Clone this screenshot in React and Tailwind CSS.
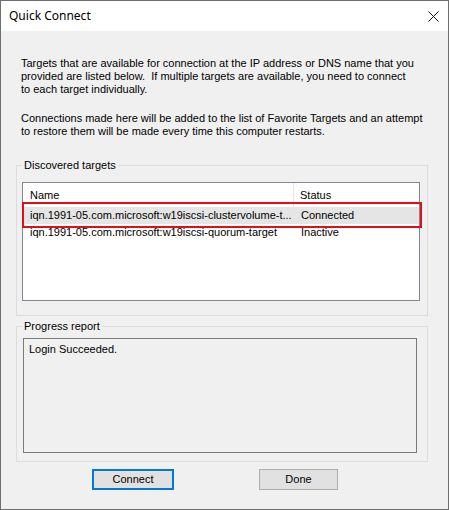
import React from 'react'

const body = { fontFamily: '"Liberation Sans", Arial, sans-serif' }

function GroupBox({ title, className, children }){
  return (
    <fieldset className={"border border-[#dcdcdc] " + className}>
      <legend className="ml-[5px] px-[2px] h-[13px] leading-[13px] text-[11px] text-black">{title}</legend>
      {children}
    </fieldset>
  )
}

function Btn({ focused, className, children }){
  return (
    <button
      className={
        'h-[21px] bg-[#e1e1e1] text-[11px] text-black leading-none ' +
        (focused ? 'border-2 border-[#0078d7] ' : 'border border-[#adadad] ') +
        className
      }
    >
      {children}
    </button>
  )
}

export default function App(){
  const targets = [
    { name: 'iqn.1991-05.com.microsoft:w19iscsi-clustervolume-t...', status: 'Connected', selected: true },
    { name: 'iqn.1991-05.com.microsoft:w19iscsi-quorum-target', status: 'Inactive' },
  ]

  return (
    <div className="w-[449px] h-[510px] border border-[#6e6e6e] bg-[#f0f0f0] flex flex-col relative overflow-hidden" style={body}>
      {/* title bar */}
      <div className="h-[30px] bg-white flex items-center justify-between pl-[8px] pr-[9px] shrink-0">
        <span className="text-[12px] text-black" style={{ fontFamily: '"Noto Sans", "Open Sans", sans-serif' }}>Quick Connect</span>
        <svg width="11" height="11" viewBox="0 0 11 11" className="mt-[1px]">
          <path d="M0.5 0.5 L10.5 10.5 M10.5 0.5 L0.5 10.5" stroke="#111" strokeWidth="1" />
        </svg>
      </div>

      <div className="px-[15px] flex flex-col text-[11px] leading-[13px] text-black">
        <p className="mt-[26px] ml-[5px] w-[396px]">
          Targets that are available for connection at the IP address or DNS name that you provided are listed below.&nbsp; If multiple targets are available, you need to connect to each target individually.
        </p>
        <p className="mt-[16px] ml-[5px] w-[405px]">
          Connections made here will be added to the list of Favorite Targets and an attempt to restore them will be made every time this computer restarts.
        </p>

        <GroupBox title="Discovered targets" className="mt-[21px] w-[412px] pb-[14px]">
          <div className="relative mt-[10px] ml-[5px] w-[398px] h-[119px] border border-[#828790] bg-white">
            <div className="flex h-[24px] items-center">
              <div className="w-[271px] pl-[7px] h-full flex items-center border-r border-[#e5e5e5]">Name</div>
              <div className="pl-[6px]">Status</div>
            </div>
            {targets.map(t => (
              <div key={t.name} className={"flex h-[17px] items-center " + (t.selected ? 'bg-[#e5e5e5]' : '')}>
                <div className="w-[272px] pl-[7px] whitespace-nowrap overflow-hidden">{t.name}</div>
                <div className="pl-[6px]">{t.status}</div>
              </div>
            ))}
            {/* red highlight annotation */}
            <div className="absolute left-[-1px] top-[19px] w-[400px] h-[26px] border-2 border-[#e0101a]"></div>
          </div>
        </GroupBox>

        <GroupBox title="Progress report" className="mt-[4px] w-[412px] pb-[8px]">
          <div className="mt-[5px] ml-[6px] w-[394px] h-[115px] border border-[#7a7a7a] bg-[#f0f0f0] pl-[5px] pt-[4px]">
            Login Succeeded.
          </div>
        </GroupBox>

        <div className="flex mt-[7px]">
          <Btn focused className="ml-[76px] w-[82px]">Connect</Btn>
          <Btn className="ml-[85px] w-[79px]">Done</Btn>
        </div>
      </div>
    </div>
  )
}
